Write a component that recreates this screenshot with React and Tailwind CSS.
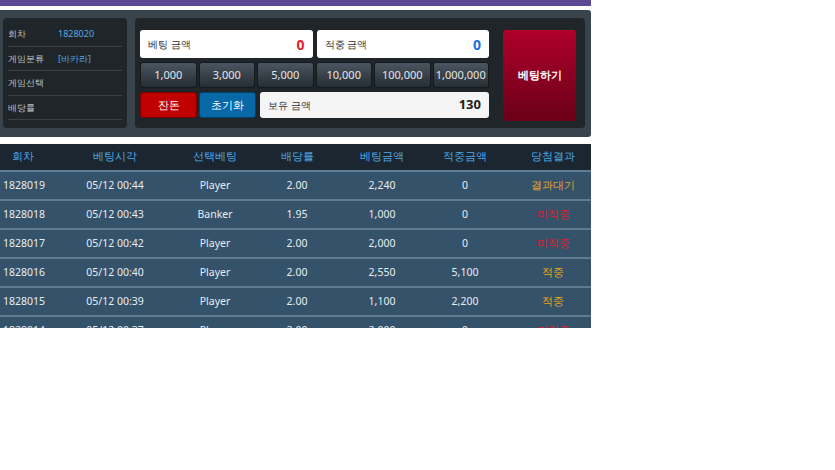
import React from "react";

const info = [
  ["회차", "1828020"],
  ["게임분류", "[바카라]"],
  ["게임선택", ""],
  ["배당률", ""],
];

const chips = ["1,000", "3,000", "5,000", "10,000", "100,000", "1,000,000"];

const rows = [
  ["1828019", "05/12 00:44", "Player", "2.00", "2,240", "0", "결과대기", "text-[#e3a22a]"],
  ["1828018", "05/12 00:43", "Banker", "1.95", "1,000", "0", "미적중", "text-[#e0202a]"],
  ["1828017", "05/12 00:42", "Player", "2.00", "2,000", "0", "미적중", "text-[#e0202a]"],
  ["1828016", "05/12 00:40", "Player", "2.00", "2,550", "5,100", "적중", "text-[#f0a818]"],
  ["1828015", "05/12 00:39", "Player", "2.00", "1,100", "2,200", "적중", "text-[#f0a818]"],
  ["1828014", "05/12 00:37", "Player", "2.00", "2,000", "0", "미적중", "text-[#e0202a]"],
];

const cols = "grid grid-cols-[45px_140px_60px_104px_66px_100px_76px]";

export default function App() {
  return (
    <div className="w-[835px] h-[470px] bg-white font-['Noto_Sans_CJK_KR','Liberation_Sans',sans-serif]">
      <div className="w-[591px]">
        <div className="h-[6px] bg-[#5b4a93]" />
        <div className="h-[4px] bg-white" />
        <div className="h-[127px] bg-[#39434b] rounded-r-[3px] flex gap-2 px-[3px] pt-2">
          <div className="w-[124px] h-[110px] bg-[#1f2529] rounded px-[5px] pt-1">
            {info.map(([k, v]) => (
              <div key={k} className="h-[24.5px] flex items-center border-b border-[#3a4248] text-[9px]">
                <span className="w-[50px] text-[#b9c0c6]">{k}</span>
                <span className="text-[#5aa9e6]">{v}</span>
              </div>
            ))}
          </div>
          <div className="w-[450px] h-[110px] bg-[#1f2529] rounded flex items-start gap-[14px] pl-[5px] pt-[12px]">
            <div className="w-[349px] flex flex-col gap-[4px]">
              <div className="flex gap-[4px] h-[28px]">
                <div className="flex-1 bg-white rounded-[3px] flex items-center justify-between px-2">
                  <span className="text-[10px] text-[#333]">베팅 금액</span>
                  <span className="text-[14px] font-bold text-[#e8202a]">0</span>
                </div>
                <div className="flex-1 bg-white rounded-[3px] flex items-center justify-between px-2">
                  <span className="text-[10px] text-[#333]">적중 금액</span>
                  <span className="text-[14px] font-bold text-[#1a6fe0]">0</span>
                </div>
              </div>
              <div className="grid grid-cols-6 gap-[2px] h-[26px]">
                {chips.map((c) => (
                  <div key={c} className="rounded-[3px] border border-[#15191c] bg-gradient-to-b from-[#4b5660] to-[#262e35] text-[#e6e6e6] text-[11px] flex items-center justify-center">
                    {c}
                  </div>
                ))}
              </div>
              <div className="flex gap-[2px] h-[26px]">
                <div className="w-[57px] rounded-[3px] bg-[#c00000] border border-[#7a0000] text-white text-[11px] flex items-center justify-center">잔돈</div>
                <div className="w-[57px] rounded-[3px] bg-[#0868a8] border border-[#04426e] text-white text-[11px] flex items-center justify-center">초기화</div>
                <div className="flex-1 ml-[2px] bg-[#f5f5f5] rounded-[3px] flex items-center justify-between px-2">
                  <span className="text-[10px] text-[#333]">보유 금액</span>
                  <span className="text-[13px] font-bold text-[#222]">130</span>
                </div>
              </div>
            </div>
            <div className="w-[73px] h-[91px] rounded-[3px] bg-gradient-to-b from-[#b0002a] to-[#6a0018] text-white text-[11px] font-bold flex items-center justify-center">
              베팅하기
            </div>
          </div>
        </div>
        <div className="h-[7px] bg-white" />
        <div className="h-[184px] overflow-hidden text-[10.5px]">
          <div className={`${cols} h-[28px] items-center bg-[#1b2630] text-[#4fa8e8] text-center border-b-2 border-[#5e7d92]`}>
            {["회차", "베팅시각", "선택베팅", "배당률", "베팅금액", "적중금액", "당첨결과"].map((h) => (
              <span key={h}>{h}</span>
            ))}
          </div>
          {rows.map((r) => (
            <div key={r[0]} className={`${cols} h-[29px] items-center bg-[#34526a] text-[#e8edf1] text-center border-b-2 border-[#5e7d92]`}>
              <span className="text-left pl-[3px]">{r[0]}</span>
              <span>{r[1]}</span>
              <span>{r[2]}</span>
              <span>{r[3]}</span>
              <span>{r[4]}</span>
              <span>{r[5]}</span>
              <span className={r[7]}>{r[6]}</span>
            </div>
          ))}
        </div>
      </div>
    </div>
  );
}
